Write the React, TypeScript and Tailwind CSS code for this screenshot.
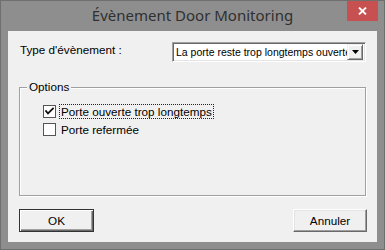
import React from 'react';

const Check = () => (
  <svg width="9" height="9" viewBox="0 0 9 9" className="block">
    <path d="M1 4 L3 6.5 L8 1.5" fill="none" stroke="#111" strokeWidth="1.8" strokeLinecap="square" />
  </svg>
);

const CheckBox = ({ checked, label, focused }: { checked?: boolean; label: string; focused?: boolean }) => (
  <div className="flex items-center h-[13px]">
    <div className="w-[13px] h-[13px] border border-[#555] bg-white flex items-center justify-center">
      {checked && <Check />}
    </div>
    <span
      className={
        focused
          ? 'ml-[4px] px-[1px] leading-[13px] outline outline-1 outline-dotted outline-[#222]'
          : 'ml-[4px] px-[1px] leading-[13px]'
      }
    >
      {label}
    </span>
  </div>
);

const Button = ({ text, def }: { text: string; def?: boolean }) => (
  <button
    className={
      def
        ? 'h-[23px] w-[75px] border border-[#333] bg-[#f0f0f0] shadow-[inset_1px_1px_0_#fff,inset_-1px_-1px_0_#696969,inset_-2px_-2px_0_#a0a0a0] text-[11.7px] text-black'
        : 'h-[23px] w-[74px] border border-t-white border-l-white border-r-[#696969] border-b-[#696969] bg-[#f0f0f0] shadow-[inset_-1px_-1px_0_#a0a0a0,inset_1px_1px_0_#e3e3e3] text-[11.7px] text-black'
    }
  >
    {text}
  </button>
);

export default function App() {
  return (
    <div className="w-[385px] h-[250px] bg-[#8e8e8e] border border-[#6f6f6f] flex flex-col font-['Liberation_Sans',Arial,sans-serif]">
      <div className="h-[30px] relative flex items-center justify-center">
        <span className="font-['Noto_Sans',sans-serif] text-[15px] text-[#303030] mt-[-1px]">Évènement Door Monitoring</span>
        <div className="absolute top-0 right-[6px] w-[31px] h-[20px] bg-[#c75050] flex items-center justify-center">
          <svg width="9" height="8" viewBox="0 0 9 8">
            <path d="M1 0.5 L8 7.5 M8 0.5 L1 7.5" stroke="#fff" strokeWidth="1.8" />
          </svg>
        </div>
      </div>
      <div className="mx-[7px] mb-[7px] flex-1 bg-[#f0f0f0] flex flex-col text-[11.7px] text-black">
        <div className="flex items-start pt-[11px] pl-[12px] pr-[11px]">
          <span className="leading-[13px] mt-[1px]">Type d'évènement :</span>
          <div className="ml-auto w-[194px] h-[20px] border border-t-[#a0a0a0] border-l-[#a0a0a0] border-r-white border-b-white shadow-[inset_1px_1px_0_#696969,inset_-1px_-1px_0_#e3e3e3] bg-white flex items-center pl-[3px] pr-[2px]">
            <div className="flex-1 overflow-hidden whitespace-nowrap leading-[13px] text-[10.5px]">La porte reste trop longtemps ouverte</div>
            <div className="w-[16px] h-[16px] bg-[#f0f0f0] border border-t-[#f0f0f0] border-l-[#f0f0f0] border-r-[#696969] border-b-[#696969] shadow-[inset_1px_1px_0_#fff,inset_-1px_-1px_0_#a0a0a0] flex items-center justify-center">
              <svg width="7" height="4" viewBox="0 0 7 4">
                <path d="M0 0 H7 L3.5 4 Z" fill="#000" />
              </svg>
            </div>
          </div>
        </div>

        <div className="relative mt-[25px] ml-[11px] w-[347px] h-[109px] border border-[#a0a0a0] shadow-[inset_1px_1px_0_#fff,1px_1px_0_#fff]">
          <span className="absolute -top-[8px] left-[7px] px-[2px] bg-[#f0f0f0] leading-[13px]">Options</span>
          <div className="flex flex-col gap-[5px] pt-[17px] pl-[23px]">
            <CheckBox checked focused label="Porte ouverte trop longtemps" />
            <CheckBox label="Porte refermée" />
          </div>
        </div>

        <div className="flex justify-between mt-[13px] pl-[11px] pr-[10px]">
          <Button text="OK" def />
          <Button text="Annuler" />
        </div>
      </div>
    </div>
  );
}
